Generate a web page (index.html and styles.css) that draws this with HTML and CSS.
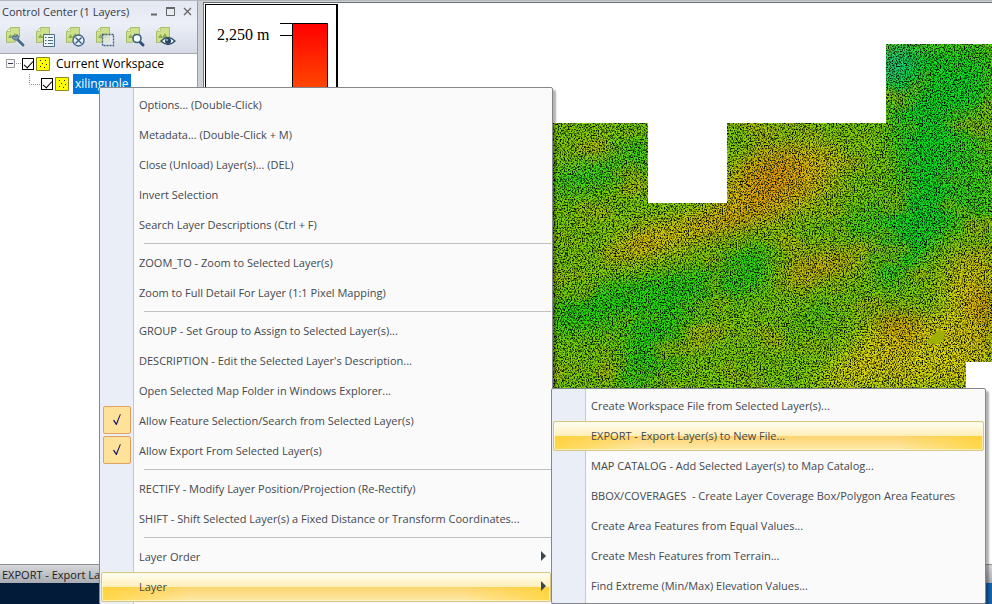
FILE: index.html
```html
<!DOCTYPE html>
<html lang="en">
<head>
<meta charset="utf-8">
<title>Control Center</title>
<link rel="stylesheet" href="styles.css">
</head>
<body>
<svg class="defs" aria-hidden="true">
  <defs>
    <symbol id="layer" viewBox="0 0 22 24">
      <path d="M1.500 5.500l4-4h9v14l-13 1z" fill="#cfe08c" stroke="#a6bd6a"/>
      <path d="M1.500 5.500l4-4v4z" fill="#eef4cc" stroke="#b3c97a"/>
      <path d="M3 12l2.500-4 2 3 2.500-4 3 5z" fill="#8fab58"/>
    </symbol>
    <symbol id="points" viewBox="0 0 14 14">
      <path d="M.5.5h13v13H.5z" fill="#ff0" stroke="#8a8a20"/>
      <path d="M4 3h1v1H4zM9 3h1v1H9zM6 6h1v1H6zM10 7h1v1h-1zM4 9h1v1H4zM8 10h1v1H8z" fill="#222"/>
    </symbol>
  </defs>
</svg>
<div class="app">
  <div class="workspace">
    <aside class="panel">
      <header class="panel-head">
        <div class="title-row">
          <h1>Control Center (1 Layers)</h1>
          <button aria-label="Minimize"><svg width="9" height="9"><path d="M2 7.500h6" stroke="#666" stroke-width="2"/></svg></button>
          <button aria-label="Maximize"><svg width="9" height="9"><path d="M.5 1h8v7.500h-8z" fill="none" stroke="#666"/><path d="M0 1h9" stroke="#666" stroke-width="2"/></svg></button>
          <button aria-label="Close"><svg width="9" height="9"><path d="M1 1l7 7M8 1l-7 7" stroke="#666" stroke-width="1.300"/></svg></button>
        </div>
        <div class="tools">
          <button aria-label="Options"><svg width="22" height="24"><use href="#layer"/><path d="M11 12l7 7" stroke="#eef2f8" stroke-width="5"/><path d="M11 12l7 7" stroke="#4b6c88" stroke-width="3" stroke-linecap="round"/><path d="M8 9.500a3 3 0 1 0 4-1l-1 2.500z" fill="#7f9cb2" stroke="#4b6c88"/></svg></button>
          <button aria-label="Metadata"><svg width="22" height="24"><use href="#layer"/><path d="M8.500 8.500h11v12h-11z" fill="#eef4fa" stroke="#4c6d88"/><path d="M10 11.500h1.500M10 14.500h1.500M10 17.500h1.500M13 11.500h5M13 14.500h5M13 17.500h5" stroke="#4c6d88"/></svg></button>
          <button aria-label="Close layer"><svg width="22" height="24"><use href="#layer"/><circle cx="13.500" cy="14.500" r="5.500" fill="#e4eef6" stroke="#3d5f7d" stroke-width="1.300"/><path d="M10.500 11.500l6 6M16.500 11.500l-6 6" stroke="#3d5f7d" stroke-width="1.400"/></svg></button>
          <button aria-label="Select"><svg width="22" height="24"><use href="#layer"/><path d="M7.500 8.500h11v11h-11z" fill="#e5eaf0" fill-opacity=".75" stroke="#3d5f7d" stroke-width="1.300" stroke-dasharray="2 1"/></svg></button>
          <button aria-label="Zoom"><svg width="22" height="24"><use href="#layer"/><path d="M14 15l4 4" stroke="#2f5270" stroke-width="3" stroke-linecap="round"/><circle cx="12" cy="12.500" r="4" fill="#f4f9fd" stroke="#3d5f7d" stroke-width="1.600"/></svg></button>
          <button aria-label="Visibility"><svg width="22" height="24"><use href="#layer"/><path d="M6 15q7-7 14 0-7 7-14 0z" fill="#f0f5fa" stroke="#2f4c66" stroke-width="1.300"/><circle cx="13" cy="15" r="3" fill="#27465f"/><circle cx="12" cy="14" r="1" fill="#9fc0da"/></svg></button>
        </div>
      </header>
      <ul class="tree">
        <li class="root">
          <svg width="16" height="10" aria-hidden="true"><path d="M.5.5h8v8h-8z" fill="#f4f6fa" stroke="#999"/><path d="M2 4.500h5" stroke="#335"/><path d="M10 4.500h5" stroke="#999" stroke-dasharray="1 1"/></svg>
          <input type="checkbox" id="ws" checked><svg width="14" height="14" aria-hidden="true"><use href="#points"/></svg><label for="ws">Current Workspace</label>
        </li>
        <li class="leaf">
          <svg width="12" height="20" aria-hidden="true"><path d="M.5 0v10.500H11" fill="none" stroke="#888" stroke-dasharray="1 1"/></svg>
          <input type="checkbox" id="xl" checked><svg width="14" height="14" aria-hidden="true"><use href="#points"/></svg><label for="xl" class="picked">xilinguole</label>
        </li>
      </ul>
    </aside>
    <main class="canvas">
      <div class="legend">
        <span>2,250 m</span>
        <svg width="48" height="200" aria-hidden="true">
          <defs><linearGradient id="ramp" x1="0" y1="0" x2="0" y2="1"><stop offset="0" stop-color="#f00"/><stop offset=".33" stop-color="#ff4800"/><stop offset="1" stop-color="#fa0"/></linearGradient></defs>
          <path d="M12.500.5h35V200h-35z" fill="url(#ramp)" stroke="#000"/><path d="M0 .5h12M0 12.500h12" stroke="#000"/>
        </svg>
      </div>
      <svg class="terrain" width="439" height="346" role="img" aria-label="Elevation map">
        <defs>
          <clipPath id="edge"><path d="M0 79H95V159H174V79H333V0H439V318H413V346H0z"/></clipPath>
          <filter id="soft" x="-50%" y="-50%" width="200%" height="200%"><feGaussianBlur stdDeviation="11"/></filter>
          <filter id="grain" x="0" y="0" width="100%" height="100%" color-interpolation-filters="sRGB"><feTurbulence type="fractalNoise" baseFrequency=".71 .67" numOctaves="4" seed="7"/><feColorMatrix values="0 0 0 0 0  0 0 0 0 0.040  0 0 0 0 0  3 2 0 0 -2.250"/></filter>
          <filter id="patch" x="0" y="0" width="100%" height="100%" color-interpolation-filters="sRGB"><feTurbulence type="fractalNoise" baseFrequency=".022 .032" numOctaves="4" seed="12"/><feColorMatrix values="0 0 0 0 0.860  0 0 0 0 0.720  0 0 0 0 0  4 0 0 0 -2"/></filter>
        </defs>
        <g clip-path="url(#edge)">
          <path d="M0 0h439v346H0z" fill="#7fd400"/>
          <g filter="url(#soft)">
            <path d="M0 125L90 90V120L20 145H0z" fill="#10dc20"/>
            <path d="M15 105L65 85L50 108L10 120z" fill="#b8c400"/>
            <path d="M0 260L70 232 150 225 215 195V240L130 270 110 345H65L80 280 0 290z" fill="#22d80c"/>
            <path d="M320 0H439V50L410 105V170L385 200 335 245 315 210 350 120z" fill="#0cdc20"/>
            <path d="M333 0h30L345 40H320z" fill="#12c480"/>
            <path d="M405 75h40v110h-35z" fill="#3cd818"/>
            <path d="M265 195L320 155 330 190 300 205z" fill="#45d410"/>
            <path d="M185 115L240 95 295 105 275 150 225 180 165 185 130 205 50 222 75 185 155 165z" fill="#e0c800"/>
            <path d="M190 120L240 105 255 140 195 175z" fill="#e4a000"/>
            <path d="M150 180L210 155 205 180 150 195z" fill="#e4a800"/>
            <path d="M225 230L265 210 315 205 300 225 245 240z" fill="#e4b000"/>
            <path d="M439 225L385 235 395 270 325 270 300 300 255 346H439z" fill="#e0da00"/>
            <path d="M445 240L410 252 440 310z" fill="#e09a00"/>
            <ellipse cx="347" cy="280" rx="27" ry="9" fill="#df8500"/>
            <path d="M380 225L405 210 439 210 425 230z" fill="#d8c400"/>
            <path d="M255 270L290 250 280 275 225 290z" fill="#39cf15"/>
          </g>
          <path d="M0 0h439v346H0z" filter="url(#patch)" opacity=".45"/>
          <path d="M0 0h439v346H0z" filter="url(#grain)"/>
          <path d="M373 299l13-14 6 4-2 7-5 4z" fill="#9fb000"/>
        </g>
      </svg>
    </main>
  </div>
  <footer class="status"><span>EXPORT - Export La</span></footer>
  <div class="desktop"></div>
</div>

<div class="menu context" role="menu">
  <button role="menuitem">Options... (Double-Click)</button>
  <button role="menuitem">Metadata... (Double-Click + M)</button>
  <button role="menuitem">Close (Unload) Layer(s)... (DEL)</button>
  <button role="menuitem">Invert Selection</button>
  <button role="menuitem">Search Layer Descriptions (Ctrl + F)</button>
  <hr>
  <button role="menuitem">ZOOM_TO - Zoom to Selected Layer(s)</button>
  <button role="menuitem">Zoom to Full Detail For Layer (1:1 Pixel Mapping)</button>
  <hr>
  <button role="menuitem">GROUP - Set Group to Assign to Selected Layer(s)...</button>
  <button role="menuitem">DESCRIPTION - Edit the Selected Layer's Description...</button>
  <button role="menuitem">Open Selected Map Folder in Windows Explorer...</button>
  <button role="menuitemcheckbox" aria-checked="true"><span class="tick"><svg width="12" height="14"><path d="M2 7.500l1.200-.8 2 3.300L9 1l.8.500L5.800 12H5z" fill="#1c1c6c"/></svg></span>Allow Feature Selection/Search from Selected Layer(s)</button>
  <button role="menuitemcheckbox" aria-checked="true"><span class="tick"><svg width="12" height="14"><path d="M2 7.500l1.200-.8 2 3.300L9 1l.8.500L5.800 12H5z" fill="#1c1c6c"/></svg></span>Allow Export From Selected Layer(s)</button>
  <hr>
  <button role="menuitem">RECTIFY - Modify Layer Position/Projection (Re-Rectify)</button>
  <button role="menuitem">SHIFT - Shift Selected Layer(s) a Fixed Distance or Transform Coordinates...</button>
  <hr>
  <button role="menuitem" class="parent">Layer Order<svg width="6" height="10"><path d="M0 0l5 5-5 5z" fill="#3c444c"/></svg></button>
  <button role="menuitem" class="parent hot">Layer<svg width="6" height="10"><path d="M0 0l5 5-5 5z" fill="#3c444c"/></svg></button>
</div>

<div class="menu submenu" role="menu">
  <button role="menuitem">Create Workspace File from Selected Layer(s)...</button>
  <button role="menuitem" class="hot">EXPORT - Export Layer(s) to New File...</button>
  <button role="menuitem">MAP CATALOG - Add Selected Layer(s) to Map Catalog...</button>
  <button role="menuitem">BBOX/COVERAGES&nbsp; - Create Layer Coverage Box/Polygon Area Features</button>
  <button role="menuitem">Create Area Features from Equal Values...</button>
  <button role="menuitem">Create Mesh Features from Terrain...</button>
  <button role="menuitem">Find Extreme (Min/Max) Elevation Values...</button>
</div>
</body>
</html>
```
FILE: styles.css
```css
* { box-sizing: border-box; }
body {
  margin: 0;
  overflow: hidden;
  font: 11px "Open Sans", "Noto Sans", sans-serif;
  color: #222;
}
button {
  border: 0;
  padding: 0;
  background: none;
  font: inherit;
  color: inherit;
}
svg { display: block; flex: none; }
.defs { position: absolute; width: 0; height: 0; }

.app { display: flex; flex-direction: column; height: 100vh; }
.workspace { display: flex; flex: 1; min-height: 0; background: #cdd0d7; }

.panel {
  display: flex;
  flex-direction: column;
  width: 198px;
  border-top: 1px solid #8c8e94;
  border-right: 1px solid #989ba3;
  background: #fff;
}
.panel-head {
  height: 53px;
  border-bottom: 1px solid #a4a7ae;
  background: linear-gradient(#e4e8f2, #eceff7 45%, #d5dae6);
}
.title-row { display: flex; align-items: center; gap: 8px; height: 20px; padding: 0 5px 0 2px; }
.title-row h1 { flex: 1; margin: 0; font-size: 11px; font-weight: 400; color: #333a48; white-space: nowrap; }
.tools { display: flex; gap: 8px; padding: 5px; }

.tree { margin: 0; padding: 0; list-style: none; font-size: 12px; color: #000; }
.tree li { display: flex; align-items: center; height: 20px; padding-left: 6px; }
.tree .leaf { padding-left: 29px; }
.tree input {
  appearance: none;
  flex: none;
  display: grid;
  place-items: center;
  width: 12px;
  height: 12px;
  margin: 0 2px 0 0;
  border: 1px solid #000;
  background: #fff;
}
.tree input::before {
  content: "";
  width: 8px;
  height: 4px;
  border: solid #000;
  border-width: 0 0 1px 1px;
  transform: translateY(-1px) rotate(-48deg);
}
.tree label { height: 20px; margin-left: 4px; padding: 0 2px; line-height: 20px; white-space: nowrap; }
.tree .picked { background: #0078d7; color: #fff; }

.canvas {
  display: flex;
  flex: 1;
  align-items: flex-start;
  justify-content: space-between;
  min-width: 0;
  margin-left: 5px;
  border-top: 1px solid #6a6d70;
  border-left: 1px solid #777;
  background: #fff;
}
.workspace { border-top: 1px solid #b4b6bb; }
.panel { border-top: 0; }
.canvas { margin-top: 1px; }
.legend {
  display: flex;
  gap: 11px;
  width: 133px;
  margin: 1px 0 0 1px;
  padding: 18px 0 0 11px;
  border: solid #000;
  border-width: 1px 2px 1px 1px;
  font: 16px/24px "Liberation Serif", serif;
  color: #000;
  white-space: nowrap;
}
.terrain { margin-top: 41px; }

.status {
  height: 19px;
  padding-left: 2px;
  border-top: 1px solid #8c8e92;
  background: linear-gradient(#d6d7da, #a9adb3);
  line-height: 20px;
}
.desktop { height: 21px; background: linear-gradient(90deg, #021b38 50%, #1761ac); }

.menu {
  position: absolute;
  display: flex;
  flex-direction: column;
  padding: 2px 1px;
  border: 1px solid #85878c;
  border-radius: 2px;
  background: linear-gradient(90deg, #e9eef7 33px, #c5c8cc 33px 34px, #fafafa 34px);
  box-shadow: 3px 3px 2px rgba(0, 0, 0, .3);
  color: #44484f;
}
.context { top: 87px; left: 99px; width: 454px; }
.submenu { top: 388px; left: 551px; width: 435px; }
.menu button {
  display: flex;
  align-items: center;
  height: 30px;
  padding: 0 3px 2px 37px;
  border: 1px solid transparent;
  border-radius: 2px;
  text-align: left;
  white-space: nowrap;
}
.menu .parent { justify-content: space-between; }
.menu .hot {
  border-color: #d8c588;
  background:
    linear-gradient(90deg, rgba(255, 208, 30, .65), transparent 20% 80%, rgba(255, 208, 30, .65)) 0 100% / 100% 50% no-repeat,
    linear-gradient(#fffef5, #feefb8 49%, #fcd470 50%, #ffe9a8);
  box-shadow: inset 0 0 0 1px rgba(255, 250, 215, .7);
}
.menu hr {
  width: calc(100% - 43px);
  height: 1px;
  margin: 3px 0 4px 43px;
  border: 0;
  background: #c0c0c0;
}
.tick {
  display: grid;
  place-items: center;
  width: 28px;
  height: 28px;
  margin: 0 8px 0 -36px;
  border: 1px solid #e5a064;
  border-radius: 2px;
  background: #ffe29a;
}
```
